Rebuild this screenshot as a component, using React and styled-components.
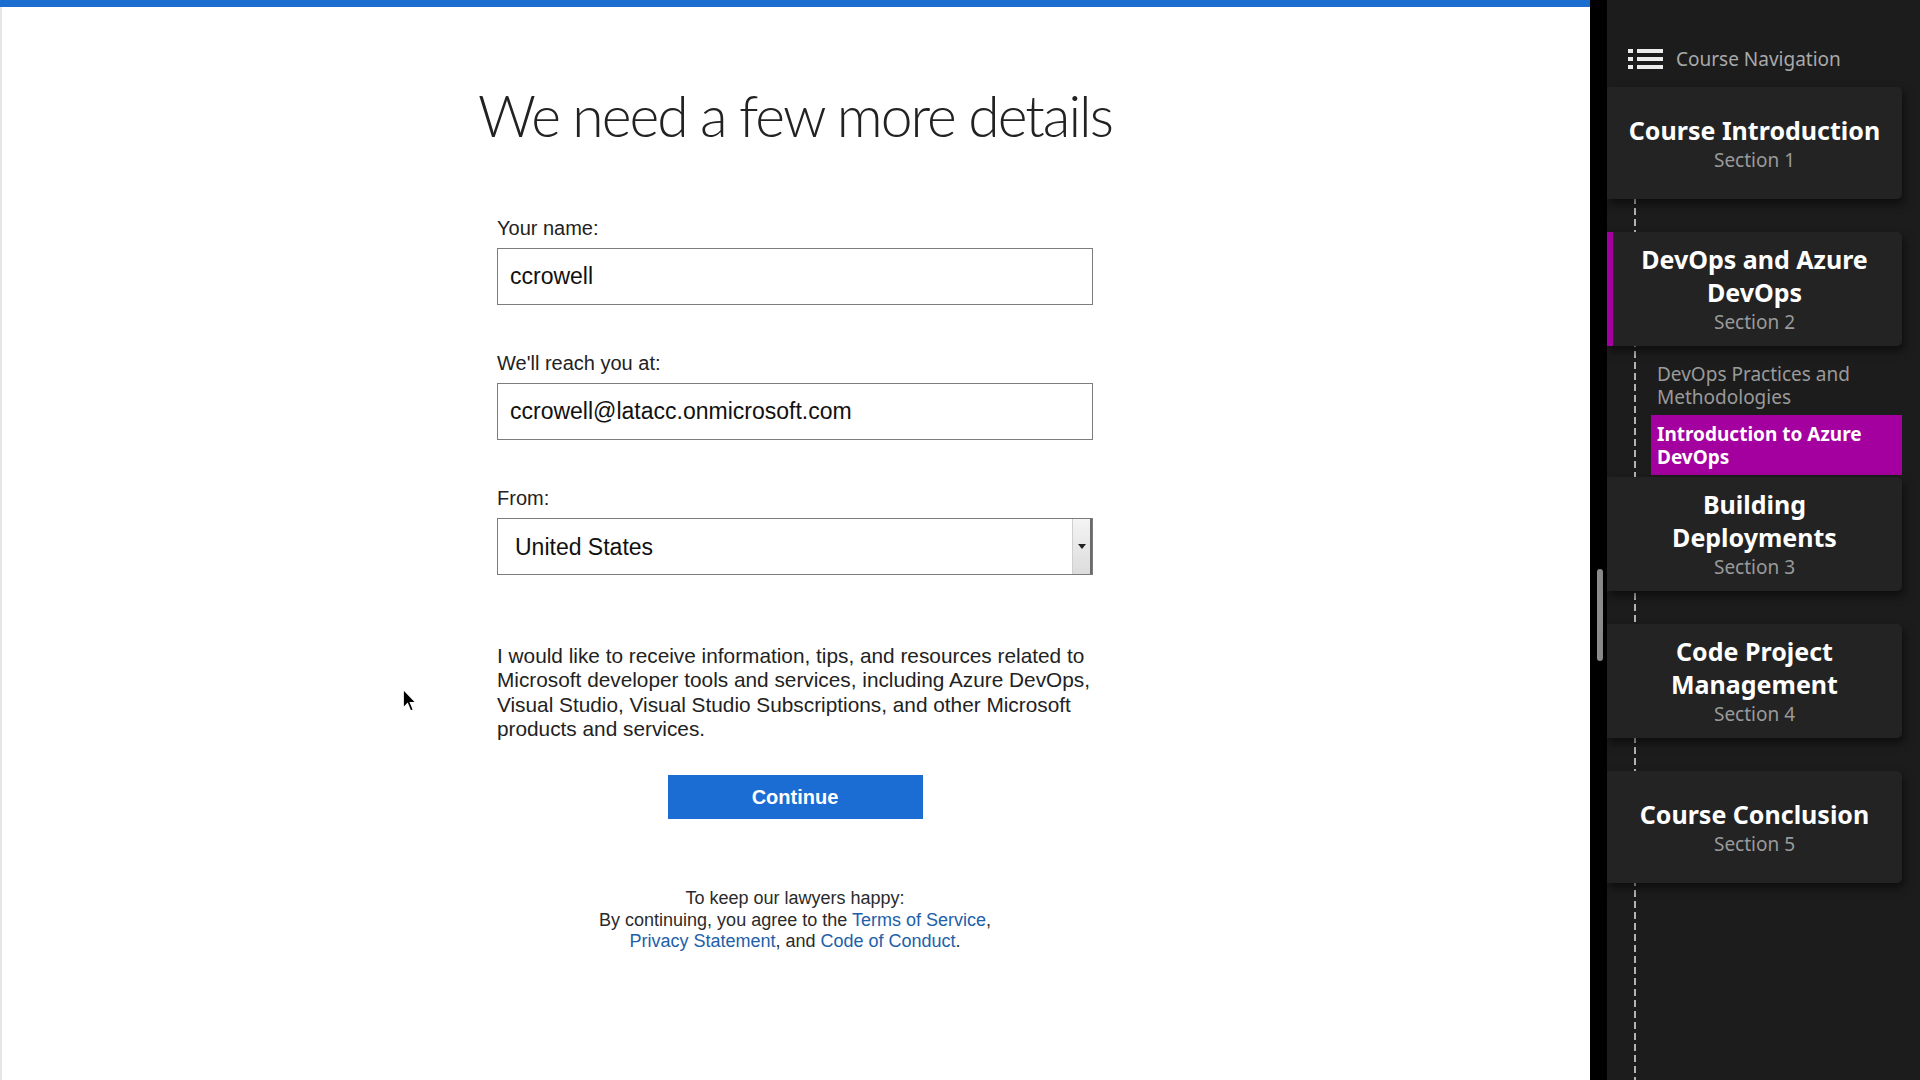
import React from 'react'
import styled, { createGlobalStyle } from 'styled-components'

const GlobalStyle = createGlobalStyle`
  html, body {
    margin: 0;
    padding: 0;
    height: 100%;
    overflow: hidden;
  }
  body {
    font-family: "Liberation Sans", Arial, sans-serif;
    background: #fff;
  }
  #root {
    height: 100vh;
  }
  * {
    box-sizing: border-box;
  }
`

const Page = styled.div`
  display: flex;
  height: 100vh;
  width: 100%;
`

const Main = styled.main`
  position: relative;
  flex: 1;
  background: #fff;
  border-top: 7px solid #1c6dd0;
  box-shadow: inset 2px 0 0 #e6e6e6;
  display: flex;
  flex-direction: column;
  align-items: center;
`

const Heading = styled.h1`
  margin: 73px 0 0;
  font-family: Lato, "Open Sans", sans-serif;
  font-weight: 300;
  font-size: 57px;
  line-height: 70px;
  letter-spacing: -2px;
  color: #222;
  white-space: nowrap;
`

const Form = styled.form`
  width: 596px;
  margin-top: 66px;
  display: flex;
  flex-direction: column;
`

const Field = styled.div`
  display: flex;
  flex-direction: column;
  & + & {
    margin-top: 46px;
  }
`

const Label = styled.label`
  font-size: 20px;
  line-height: 24px;
  color: #222;
  margin-bottom: 8px;
`

const TextInput = styled.input`
  height: 57px;
  width: 100%;
  border: 1px solid #7c7c7c;
  padding: 0 12px;
  font-family: "Liberation Sans", Arial, sans-serif;
  font-size: 23px;
  color: #111;
  background: #fff;
  outline: none;
`

const SelectWrap = styled.div`
  display: flex;
  height: 57px;
  border: 1px solid #7c7c7c;
  background: #fff;
`

const SelectField = styled.select`
  flex: 1;
  appearance: none;
  border: none;
  background: transparent;
  padding: 0 17px;
  font-family: "Liberation Sans", Arial, sans-serif;
  font-size: 23px;
  color: #111;
  outline: none;
`

const ArrowBox = styled.div`
  width: 20px;
  display: flex;
  align-items: center;
  justify-content: center;
  background: linear-gradient(to bottom, #f4f4f4, #dcdcdc);
  border-left: 1px solid #cfcfcf;
  border-right: 2px solid #6a6a6a;
  &::after {
    content: '';
    border-left: 4px solid transparent;
    border-right: 4px solid transparent;
    border-top: 5px solid #222;
  }
`

const Consent = styled.p`
  margin: 69px 0 0;
  font-size: 20.8px;
  line-height: 24.3px;
  color: #222;
  white-space: nowrap;
`

const ButtonRow = styled.div`
  display: flex;
  justify-content: center;
  margin-top: 34px;
`

const PrimaryButton = styled.button`
  width: 255px;
  height: 44px;
  border: none;
  background: #1b6cd3;
  color: #fff;
  font-family: "Liberation Sans", Arial, sans-serif;
  font-weight: 700;
  font-size: 20px;
  cursor: pointer;
`

const Legal = styled.div`
  margin-top: 69px;
  text-align: center;
  font-size: 18px;
  line-height: 21.5px;
  color: #2b2b2b;
`

const LegalLink = styled.a`
  color: #2160aa;
  text-decoration: none;
`

const Pointer = styled.svg`
  position: absolute;
  left: 402px;
  top: 681px;
`

const ScrollTrack = styled.div`
  width: 17px;
  background: #000;
  display: flex;
  flex-direction: column;
  align-items: flex-start;
  padding: 569px 0 0 7px;
`

const ScrollThumb = styled.div`
  width: 6px;
  height: 92px;
  border-radius: 3px;
  background: #8c8c8c;
`

const Sidebar = styled.aside`
  width: 313px;
  background: #1c1c1c;
  display: flex;
  flex-direction: column;
  font-family: "Noto Sans", "Open Sans", sans-serif;
`

const NavHeader = styled.div`
  display: flex;
  align-items: center;
  gap: 13px;
  height: 71px;
  padding: 47px 0 0 21px;
  color: #a9a9a9;
  font-size: 19px;
  line-height: 24px;
`

const Timeline = styled.div`
  position: relative;
  flex: 1;
  margin-top: 16px;
  padding-right: 18px;
  display: flex;
  flex-direction: column;

  &::before {
    content: '';
    position: absolute;
    left: 27px;
    top: 0;
    bottom: 0;
    width: 2px;
    background: repeating-linear-gradient(to bottom, #b3b3b3 0 7px, transparent 7px 11px);
  }
`

const Card = styled.div`
  position: relative;
  z-index: 1;
  min-height: 112px;
  margin-top: 33px;
  padding: 11px 16px;
  background: #232323;
  border-radius: 0 5px 5px 0;
  box-shadow: ${p => (p.$active ? 'inset 6px 0 0 #a4009f, ' : '')}2px 5px 10px rgba(0, 0, 0, 0.55);
  display: flex;
  flex-direction: column;
  justify-content: center;
  align-items: center;
  text-align: center;

  &:first-child {
    margin-top: 0;
  }
`

const CardTitle = styled.div`
  color: #fff;
  font-weight: 700;
  font-size: 25px;
  line-height: 33px;
`

const CardSection = styled.div`
  color: #9a9a9a;
  font-size: 19px;
  line-height: 26px;
`

const SubList = styled.div`
  position: relative;
  z-index: 1;
  margin: 9px 0 0 44px;
  display: flex;
  flex-direction: column;

  & + ${Card} {
    margin-top: 2px;
  }
`

const SubItem = styled.div`
  padding: 8px 6px 6px;
  font-size: 19px;
  line-height: 23px;
  color: ${p => (p.$active ? '#fff' : '#9a9a9a')};
  font-weight: ${p => (p.$active ? 700 : 400)};
  background: ${p => (p.$active ? '#a4009f' : 'transparent')};
`

const sections = [
  { title: 'Course Introduction', n: 1 },
  {
    title: 'DevOps and Azure DevOps',
    n: 2,
    active: true,
    lessons: [
      { name: 'DevOps Practices and Methodologies' },
      { name: 'Introduction to Azure DevOps', current: true },
    ],
  },
  { title: 'Building Deployments', n: 3 },
  { title: 'Code Project Management', n: 4 },
  { title: 'Course Conclusion', n: 5 },
]

function ListIcon() {
  return (
    <svg width="35" height="20" viewBox="0 0 35 20" fill="#ececec">
      <rect x="0" y="0" width="5" height="4" />
      <rect x="9" y="0" width="26" height="4" />
      <rect x="0" y="8" width="5" height="4" />
      <rect x="9" y="8" width="26" height="4" />
      <rect x="0" y="16" width="5" height="4" />
      <rect x="9" y="16" width="26" height="4" />
    </svg>
  )
}

function CourseNav() {
  return (
    <Sidebar>
      <NavHeader>
        <ListIcon />
        <span>Course Navigation</span>
      </NavHeader>
      <Timeline>
        {sections.map(s => (
          <React.Fragment key={s.n}>
            <Card $active={s.active}>
              <CardTitle>{s.title}</CardTitle>
              <CardSection>Section {s.n}</CardSection>
            </Card>
            {s.lessons && (
              <SubList>
                {s.lessons.map(l => (
                  <SubItem key={l.name} $active={l.current}>{l.name}</SubItem>
                ))}
              </SubList>
            )}
          </React.Fragment>
        ))}
      </Timeline>
    </Sidebar>
  )
}

export default function App() {
  return (
    <Page>
      <GlobalStyle />
      <Main>
        <Heading>We need a few more details</Heading>
        <Form onSubmit={e => e.preventDefault()}>
          <Field>
            <Label>Your name:</Label>
            <TextInput defaultValue="ccrowell" />
          </Field>
          <Field>
            <Label>We'll reach you at:</Label>
            <TextInput defaultValue="ccrowell@latacc.onmicrosoft.com" />
          </Field>
          <Field>
            <Label>From:</Label>
            <SelectWrap>
              <SelectField defaultValue="United States">
                <option>United States</option>
                <option>Canada</option>
                <option>United Kingdom</option>
              </SelectField>
              <ArrowBox />
            </SelectWrap>
          </Field>
          <Consent>
            I would like to receive information, tips, and resources related to<br />
            Microsoft developer tools and services, including Azure DevOps,<br />
            Visual Studio, Visual Studio Subscriptions, and other Microsoft<br />
            products and services.
          </Consent>
          <ButtonRow>
            <PrimaryButton type="submit">Continue</PrimaryButton>
          </ButtonRow>
        </Form>
        <Legal>
          To keep our lawyers happy:<br />
          By continuing, you agree to the <LegalLink href="#">Terms of Service</LegalLink>,<br />
          <LegalLink href="#">Privacy Statement</LegalLink>, and <LegalLink href="#">Code of Conduct</LegalLink>.
        </Legal>
        <Pointer width="16" height="25" viewBox="0 0 13 20">
          <path d="M1 1 L1 16 L4.5 12.5 L7 18.5 L9.2 17.5 L6.8 11.8 L11.5 11.8 Z" fill="#000" stroke="#fff" strokeWidth="1" />
        </Pointer>
      </Main>
      <ScrollTrack>
        <ScrollThumb />
      </ScrollTrack>
      <CourseNav />
    </Page>
  )
}
